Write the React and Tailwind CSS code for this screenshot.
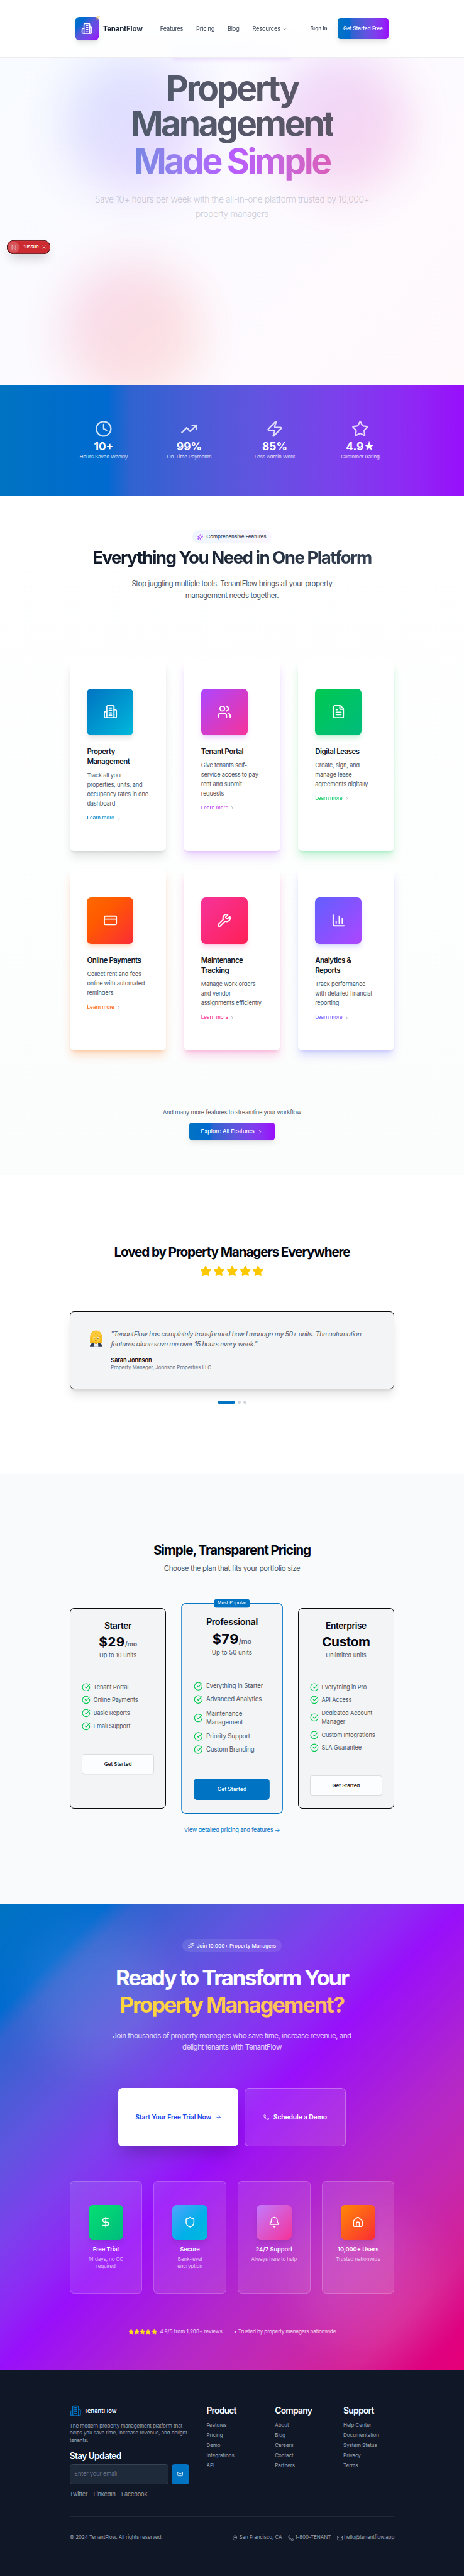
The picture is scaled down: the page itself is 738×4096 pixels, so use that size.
import React from "react";
import {
  ArrowRight, Bell, ChartColumn, ChevronDown, ChevronRight, CircleCheckBig, Clock, CreditCard,
  DollarSign, FileText, House, Mail, MapPin, Phone, Shield, Sparkles, Star, TrendingUp, Users,
  Wrench, X, Zap,
} from "lucide-react";

const BRAND =
  "bg-[linear-gradient(90deg,#0073c2_0%,#006ad0_23%,#2f63d0_28%,#4f5ad8_45%,#5f55df_54%,#7c40ec_73%,#8f27f5_89%,#980ffa_100%)]";

function Building({ className }) {
  return (
    <svg viewBox="0 0 24 24" fill="none" stroke="currentColor" strokeWidth="2" strokeLinecap="round" strokeLinejoin="round" className={className}>
      <path d="M6 22V4a2 2 0 0 1 2-2h8a2 2 0 0 1 2 2v18Z" />
      <path d="M6 12H4a2 2 0 0 0-2 2v6a2 2 0 0 0 2 2h2" />
      <path d="M18 9h2a2 2 0 0 1 2 2v9a2 2 0 0 1-2 2h-2" />
      <path d="M10 6h4M10 10h4M10 14h4M10 18h4" />
    </svg>
  );
}

function Header() {
  return (
    <header className="absolute inset-x-0 top-0 z-10 h-[160px] border-b border-[#ececef] bg-white/90 backdrop-blur-xl">
      <div className="mx-auto flex h-full w-[896px] items-center px-4">
        <div className="flex w-[234px] items-center gap-3">
          <div className="relative flex size-16 items-center justify-center rounded-[10px] bg-[linear-gradient(135deg,#0073c2_0%,#006ad0_23%,#5459da_45%,#7c40ec_73%,#980ffa_100%)] text-white shadow-lg">
            <Building className="size-8" />
            <Sparkles className="absolute -right-1 -top-1 size-3 text-[#f5b82e]" />
          </div>
          <span className="bg-[linear-gradient(90deg,#101828,#364153)] bg-clip-text text-[20px] font-bold leading-7 tracking-[-0.022em] text-transparent">TenantFlow</span>
        </div>
        <nav className="flex items-center gap-[36px] text-[16px] leading-6 tracking-[-0.018em] text-[#364153]">
          <span>Features</span>
          <span>Pricing</span>
          <span>Blog</span>
          <span className="flex items-center gap-1">Resources <ChevronDown className="size-4" /></span>
        </nav>
        <div className="ml-auto flex items-center gap-7 text-[14px] font-medium leading-5">
          <span className="tracking-[0.01em] text-[#364153]">Sign In</span>
          <span className={`flex h-14 w-[141px] items-center justify-center rounded-lg text-white shadow-lg ${BRAND}`}>Get Started Free</span>
        </div>
      </div>
    </header>
  );
}

function Hero() {
  return (
    <section className="relative flex h-[1062px] flex-col items-center overflow-hidden bg-[linear-gradient(135deg,#f7fbff_0%,#fbfaff_45%,#fdfaff_60%,#fff9fc_100%)] pt-[107px]">
      <div className="absolute left-[175px] top-[150px] size-96 rounded-full bg-[linear-gradient(135deg,#155dfc,#9810fa)] opacity-[0.14] blur-3xl" />
      <div className="absolute left-[747px] top-[150px] size-96 rounded-full bg-[linear-gradient(135deg,#9810fa,#e60076)] opacity-[0.14] blur-3xl" />
      <div className="absolute left-[173px] top-[719px] size-96 rounded-full bg-[linear-gradient(135deg,#e60076,#f54900)] opacity-[0.13] blur-3xl" />
      <div className="mb-[40px] h-12 w-[337px] rounded-xl bg-[linear-gradient(90deg,#b5e0f5,#e3ccf7)] opacity-60 shadow-[0_10px_15px_-3px_rgba(173,70,255,0.4)]" />
      <h1 className="relative text-center text-[96px] font-bold leading-[96px] tracking-[-0.062em]">
        <span className="block bg-[linear-gradient(90deg,#505a6b,#5b5566)] bg-clip-text pb-2 text-transparent">Property<br />Management</span>
        <span className="block bg-[linear-gradient(90deg,#7488e2_0%,#9b7df0_25%,#b75cff_50%,#c866da_75%,#da5fb8_100%)] bg-clip-text pb-4 text-transparent">Made Simple</span>
      </h1>
      <p className="relative mt-6 w-[780px] text-center text-[24px] font-light leading-[39px] tracking-[-0.028em] text-[#4a5565]/30">
        Save 10+ hours per week with the all-in-one platform trusted by 10,000+ property managers
      </p>
      <div className="absolute left-[19px] top-[663px] flex h-[38px] w-[120px] items-center rounded-full bg-[#ca2a30] text-white shadow-[inset_0_0_0_1px_#0a0a0a,inset_0_0_0_2px_#e5484d,0_16px_32px_-8px_rgba(0,0,0,0.24)]">
        <span className="ml-[3px] flex size-8 items-center justify-center rounded-full bg-white/20">
          <svg viewBox="0 0 14 14" className="size-3.5" fill="none" stroke="#fff" strokeWidth="1.3">
            <path d="M2 13.5V1L12.5 14" strokeOpacity="0.75" />
            <path d="M11 1v8" strokeOpacity="0.55" />
          </svg>
        </span>
        <span className="ml-[11px] whitespace-nowrap text-[13px] font-semibold leading-5">1 Issue</span>
        <X className="ml-[7px] size-[14px] shrink-0" />
      </div>
    </section>
  );
}

const STATS = [
  [Clock, "10+", "Hours Saved Weekly"],
  [TrendingUp, "99%", "On-Time Payments"],
  [Zap, "85%", "Less Admin Work"],
  [Star, "4.9", "Customer Rating"],
];

function Stats() {
  return (
    <section className={`h-[304px] pt-24 text-white ${BRAND}`}>
      <div className="mx-auto grid w-[896px] grid-cols-4 gap-12">
        {STATS.map(([Icon, n, label]) => (
          <div key={label} className="flex flex-col items-center whitespace-nowrap">
            <Icon className="size-12 opacity-80" />
            <div className="mt-2 flex h-9 items-center text-[30px] font-bold leading-9">
              {n}
              {n === "4.9" && <span className="text-[34px] leading-9 [font-family:'DejaVu_Sans',sans-serif]">★</span>}
            </div>
            <div className="text-[14px] leading-5 tracking-[-0.015em] text-white/80">{label}</div>
          </div>
        ))}
      </div>
    </section>
  );
}

const FEATURES = [
  [Building, "Property Management", "Track all your properties, units, and occupancy rates in one dashboard", "bg-[linear-gradient(135deg,#0073c2,#00b8db)]", "shadow-[0_20px_25px_-5px_rgba(0,0,0,0.1),0_8px_10px_-6px_rgba(0,0,0,0.1)]", "shadow-[0_10px_15px_-3px_rgba(0,0,0,0.1),0_4px_6px_-4px_rgba(0,0,0,0.1)]", "bg-[linear-gradient(90deg,#0073c2,#0092d0)]"],
  [Users, "Tenant Portal", "Give tenants self-service access to pay rent and submit requests", "bg-[linear-gradient(135deg,#ad46ff,#f6339a)]", "shadow-[0_20px_25px_-5px_rgba(173,70,255,0.2),0_8px_10px_-6px_rgba(173,70,255,0.2)]", "shadow-[0_10px_15px_-3px_rgba(173,70,255,0.2),0_4px_6px_-4px_rgba(173,70,255,0.2)]", "bg-[linear-gradient(90deg,#ad46ff,#cf44dd)]"],
  [FileText, "Digital Leases", "Create, sign, and manage lease agreements digitally", "bg-[linear-gradient(135deg,#00c950,#00bc7d)]", "shadow-[0_20px_25px_-5px_rgba(0,201,80,0.2),0_8px_10px_-6px_rgba(0,201,80,0.2)]", "shadow-[0_10px_15px_-3px_rgba(0,201,80,0.2),0_4px_6px_-4px_rgba(0,201,80,0.2)]", "bg-[linear-gradient(90deg,#00c950,#00c366)]"],
  [CreditCard, "Online Payments", "Collect rent and fees online with automated reminders", "bg-[linear-gradient(135deg,#ff6900_0%,#ff5a00_35%,#fb2c36_100%)]", "shadow-[0_20px_25px_-5px_rgba(255,105,0,0.2),0_8px_10px_-6px_rgba(255,105,0,0.2)]", "shadow-[0_10px_15px_-3px_rgba(255,105,0,0.2),0_4px_6px_-4px_rgba(255,105,0,0.2)]", "bg-[linear-gradient(90deg,#ff6900,#ff5510)]"],
  [Wrench, "Maintenance Tracking", "Manage work orders and vendor assignments efficiently", "bg-[linear-gradient(135deg,#f6339a,#ff2056)]", "shadow-[0_20px_25px_-5px_rgba(246,51,154,0.2),0_8px_10px_-6px_rgba(246,51,154,0.2)]", "shadow-[0_10px_15px_-3px_rgba(246,51,154,0.2),0_4px_6px_-4px_rgba(246,51,154,0.2)]", "bg-[linear-gradient(90deg,#f6339a,#fa2c80)]"],
  [ChartColumn, "Analytics & Reports", "Track performance with detailed financial reporting", "bg-[linear-gradient(135deg,#615fff,#ad46ff)]", "shadow-[0_20px_25px_-5px_rgba(97,95,255,0.2),0_8px_10px_-6px_rgba(97,95,255,0.2)]", "shadow-[0_10px_15px_-3px_rgba(97,95,255,0.2),0_4px_6px_-4px_rgba(97,95,255,0.2)]", "bg-[linear-gradient(90deg,#615fff,#8655ff)]"],
];

function Features() {
  return (
    <section className="flex h-[1875px] flex-col items-center bg-[linear-gradient(180deg,#ffffff,#fbfdfc)] pt-24">
      <div className="flex h-9 w-[220px] items-center justify-center gap-2 rounded-full bg-[linear-gradient(90deg,#eff6ff,#faf5ff)] text-[14px] font-medium tracking-[-0.006em] text-[#364153]">
        <Sparkles className="size-4 text-[#9810fa]" />
        Comprehensive Features
      </div>
      <h2 className="mt-4 bg-[linear-gradient(90deg,#101828,#1e2939_50%,#364153)] bg-clip-text text-[48px] font-bold leading-[48px] tracking-[-0.056em] text-transparent">
        Everything You Need in One Platform
      </h2>
      <p className="mt-8 w-[600px] text-center text-[20px] leading-[32.5px] tracking-[-0.037em] text-[#4a5565]">
        Stop juggling multiple tools. TenantFlow brings all your property management needs together.
      </p>
      <div className="mt-[160px] grid w-[896px] grid-cols-3 gap-12">
        {FEATURES.map(([Icon, title, text, grad, shadow, iconShadow, link]) => (
          <div key={title} className={`rounded-xl bg-white px-12 py-20 ${shadow}`}>
            <div className={`flex size-32 items-center justify-center rounded-xl text-white ${grad} ${iconShadow}`}>
              <Icon className="size-10" />
            </div>
            <h3 className="mt-8 text-[20px] font-semibold leading-7 tracking-[-0.045em] text-[#101828]">{title}</h3>
            <p className="mt-3 text-[16px] leading-[26px] tracking-[-0.021em] text-[#4a5565]">{text}</p>
            <div className="mt-4 flex items-center gap-1 text-[14px] font-medium leading-5 tracking-[-0.007em]">
              <span className={`bg-clip-text text-transparent ${link}`}>Learn more</span>
              <ChevronRight className="size-4 text-[#99a1af]" />
            </div>
          </div>
        ))}
      </div>
      <p className="mt-[160px] text-[16px] leading-6 tracking-[-0.023em] text-[#4a5565]">And many more features to streamline your workflow</p>
      <div className={`mt-4 flex h-12 w-[236px] items-center justify-center gap-2 rounded-lg text-[16px] font-medium tracking-[-0.012em] text-white shadow-lg ${BRAND}`}>
        Explore All Features <ChevronRight className="size-4" />
      </div>
    </section>
  );
}

function WomanOffice() {
  return (
    <svg viewBox="0 0 48 48" className="size-12">
      <path d="M24 2.5C14 2.5 8 10 7.500 20c-.3 6-.4 11-.5 17 3 1.500 8 2 11 2h12c3 0 8-.5 11-2-.1-6-.2-11-.5-17C40 10 34 2.500 24 2.500Z" fill="#f4b81c" />
      <path d="M7 48c0-6 2.500-9.500 9-10.500l8 2 8-2c6.500 1 9 4.500 9 10.500Z" fill="#2f3b57" />
      <path d="M18.500 37h11l.8 11H17.700Z" fill="#e6eef7" />
      <path d="M20 32h8v6c-1.500 2.500-6.500 2.500-8 0Z" fill="#e59a0a" />
      <ellipse cx="24" cy="23.500" rx="12.300" ry="12.500" fill="#fecb35" />
      <path d="M24 4C15 4 9.500 10 9 21c6-1 11-5 13-11 4 7 9 10 17 11C38.500 9 32 4 24 4Z" fill="#fbc93a" />
      <path d="M22 10c4 7 9 10 15.500 11" fill="none" stroke="#d98f0c" strokeWidth="1" />
      <ellipse cx="18.500" cy="23.500" rx="2.200" ry="2.500" fill="#fff" />
      <ellipse cx="29.500" cy="23.500" rx="2.200" ry="2.500" fill="#fff" />
      <circle cx="18.700" cy="23.700" r="1.700" fill="#3a2208" />
      <circle cx="29.300" cy="23.700" r="1.700" fill="#3a2208" />
      <path d="M20.500 30.500c2 1 5 1 7 0-.8 2.300-6.200 2.300-7 0Z" fill="#6b1f10" />
    </svg>
  );
}

function Testimonials() {
  return (
    <section className="flex h-[822px] flex-col items-center bg-white pt-48">
      <h2 className="text-[36px] font-bold leading-10 tracking-[-0.057em] text-[#030712]">Loved by Property Managers Everywhere</h2>
      <div className="mt-4 flex gap-1">
        {[0, 1, 2, 3, 4].map((i) => <Star key={i} className="size-8 fill-[#fcc800] text-[#fcc800]" />)}
      </div>
      <div className="mt-24 flex h-[214px] w-[896px] gap-4 rounded-xl border border-[#0a0a0a] bg-[#f3f4f6] p-12 shadow-xl">
        <WomanOffice />
        <div className="w-[700px]">
          <p className="text-[18px] italic leading-7 tracking-[-0.032em] text-[#4a5565]">
            "TenantFlow has completely transformed how I manage my 50+ units. The automation features alone save me over 15 hours every week."
          </p>
          <p className="mt-4 text-[16px] font-semibold leading-6 tracking-[-0.012em] text-[#030712]">Sarah Johnson</p>
          <p className="text-[14px] leading-5 tracking-[-0.015em] text-[#6a7282]">Property Manager, Johnson Properties LLC</p>
        </div>
      </div>
      <div className="mt-8 flex gap-2">
        <span className="h-2 w-12 rounded-full bg-[#0073c2]" />
        <span className="size-2 rounded-full bg-[#d1d5dc]" />
        <span className="size-2 rounded-full bg-[#d1d5dc]" />
      </div>
    </section>
  );
}

function Plan({ name, price, per, units, items, featured }) {
  return (
    <div className={featured
      ? "relative h-[553px] scale-105 rounded-xl border-2 border-[#0073c2] bg-[#f3f4f6] px-8 pt-8"
      : "relative h-[553px] rounded-xl border border-[#0a0a0a] bg-[#f3f4f6] px-8 pt-8"}>
      {featured && (
        <span className="absolute -top-[12px] left-1/2 flex h-[22px] w-[94px] -translate-x-1/2 items-center justify-center whitespace-nowrap rounded-md bg-[#0073c2] text-[12px] font-medium text-white">Most Popular</span>
      )}
      <div className="flex flex-col items-center">
        <h3 className="text-[24px] font-semibold leading-8 tracking-[-0.03em] text-[#030712]">{name}</h3>
        <div className="mt-2 flex h-10 items-baseline text-[36px] font-bold leading-10 text-[#030712]">
          <span className={per ? "tracking-[0.02em]" : "tracking-[-0.02em]"}>{price}</span>
          {per && <span className="text-[18px] leading-7 tracking-[-0.018em] text-[#6a7282]">/mo</span>}
        </div>
        <p className="mt-1 text-[16px] leading-6 text-[#4a5565]">{units}</p>
      </div>
      <ul className="mt-16 flex flex-col gap-3 text-[16px] leading-6 tracking-[-0.016em] text-[#4a5565]">
        {items.map((t) => (
          <li key={t} className="flex items-center gap-2"><CircleCheckBig className="size-6 shrink-0 text-[#00c950]" />{t}</li>
        ))}
      </ul>
      <div className={featured
        ? "mt-16 flex h-14 items-center justify-center rounded-lg bg-[#0073c2] text-[14px] font-medium text-white"
        : "mt-16 flex h-14 items-center justify-center rounded-lg border border-[#d9dce1] bg-[#fcfdfe] text-[14px] font-medium text-[#030712] shadow-xs"}>
        Get Started
      </div>
    </div>
  );
}

function Pricing() {
  return (
    <section className="flex h-[1189px] flex-col items-center bg-[#f9fafc] pt-48">
      <h2 className="text-[36px] font-bold leading-10 tracking-[-0.054em] text-[#030712]">Simple, Transparent Pricing</h2>
      <p className="mt-4 text-[20px] leading-7 tracking-[-0.033em] text-[#4a5565]">Choose the plan that fits your portfolio size</p>
      <div className="mt-24 grid w-[896px] grid-cols-3 gap-12">
        <Plan name="Starter" price="$29" per units="Up to 10 units" items={["Tenant Portal", "Online Payments", "Basic Reports", "Email Support"]} />
        <Plan featured name="Professional" price="$79" per units="Up to 50 units" items={["Everything in Starter", "Advanced Analytics", "Maintenance Management", "Priority Support", "Custom Branding"]} />
        <Plan name="Enterprise" price="Custom" units="Unlimited units" items={["Everything in Pro", "API Access", "Dedicated Account Manager", "Custom Integrations", "SLA Guarantee"]} />
      </div>
      <p className="mt-12 text-[16px] leading-6 tracking-[-0.022em] text-[#0073c2]">View detailed pricing and features →</p>
    </section>
  );
}

const PERKS = [
  [DollarSign, "Free Trial", "14 days, no CC required", "bg-[linear-gradient(135deg,#05df72,#00bc7d)]"],
  [Shield, "Secure", "Bank-level encryption", "bg-[linear-gradient(135deg,#51a2ff_0%,#00b0e8_60%,#00b8db_100%)]"],
  [Bell, "24/7 Support", "Always here to help", "bg-[linear-gradient(135deg,#c27aff,#f6339a)]"],
  [House, "10,000+ Users", "Trusted nationwide", "bg-[linear-gradient(135deg,#ff8904,#fb2c36)]"],
];

function CallToAction() {
  return (
    <section className="relative flex h-[1285px] flex-col items-center overflow-hidden bg-[linear-gradient(135deg,#0073c2_0%,#006ad0_11.5%,#2f63d0_14.5%,#4f5ad8_22.5%,#5f55df_27%,#7c40ec_36.500%,#8f27f5_44.500%,#980ffa_50%,#b428c8_68%,#c428b0_78%,#d61f94_88%,#df0080_95.500%,#e60076_100%)] pt-24 text-white">
      <div className="absolute left-[74px] top-[56px] size-96 rounded-full bg-white/10 blur-3xl" />
      <div className="absolute left-[820px] top-[850px] size-96 rounded-full bg-white/10 blur-3xl" />
      <div className="relative flex h-9 w-[274px] items-center justify-center gap-2 rounded-full bg-white/10 text-[14px] font-medium">
        <Sparkles className="size-4" /> Join 10,000+ Property Managers
      </div>
      <h2 className="relative mt-8 text-center text-[60px] font-bold leading-[75px] tracking-[-0.061em]">
        Ready to Transform Your
        <span className="block bg-[linear-gradient(90deg,#ffd83a,#ffb86a)] bg-clip-text text-transparent">Property Management?</span>
      </h2>
      <p className="relative mt-8 w-[700px] text-center text-[20px] leading-[32.5px] tracking-[-0.041em] text-white/80">
        Join thousands of property managers who save time, increase revenue, and delight tenants with TenantFlow
      </p>
      <div className="relative mt-24 flex gap-4 text-[18px] font-semibold tracking-[-0.014em]">
        <div className="flex h-[160px] w-[332px] items-center justify-center gap-3 rounded-xl bg-white text-[#1a4be8] shadow-2xl">
          Start Your Free Trial Now <ArrowRight className="size-4" />
        </div>
        <div className="flex h-[160px] w-[280px] items-center justify-center gap-3 rounded-xl border-2 border-white/30 bg-white/10">
          <Phone className="size-4" /> Schedule a Demo
        </div>
      </div>
      <div className="relative mt-24 grid w-[896px] grid-cols-4 gap-8">
        {PERKS.map(([Icon, title, text, grad]) => (
          <div key={title} className="flex h-[310px] flex-col items-center rounded-xl border border-white/20 bg-white/10 px-8 pt-16 text-center">
            <div className={`flex size-24 shrink-0 items-center justify-center rounded-xl shadow-lg ${grad}`}><Icon className="size-8" /></div>
            <h3 className="mt-4 whitespace-nowrap text-[16px] font-semibold leading-6">{title}</h3>
            <p className="mt-1 text-[14px] leading-5 tracking-[-0.015em] text-white/70">{text}</p>
          </div>
        ))}
      </div>
      <div className="relative mt-24 flex items-center gap-8 text-[14px] leading-5 text-white/80">
        <span className="flex items-center gap-2 tracking-[-0.004em]">
          <span className="flex">{[0, 1, 2, 3, 4].map((i) => <Star key={i} className="size-4 fill-[#ffdf20] text-[#ffdf20]" />)}</span>
          4.9/5 from 1,200+ reviews
        </span>
        <span className="tracking-[-0.013em]">• Trusted by property managers nationwide</span>
      </div>
    </section>
  );
}

const COLUMNS = [
  ["Product", ["Features", "Pricing", "Demo", "Integrations", "API"]],
  ["Company", ["About", "Blog", "Careers", "Contact", "Partners"]],
  ["Support", ["Help Center", "Documentation", "System Status", "Privacy", "Terms"]],
];

function Footer() {
  return (
    <footer className="h-[567px] bg-[#101828] pt-24 text-[#99a1af]">
      <div className="mx-auto w-[896px]">
        <div className="grid grid-cols-5 gap-12">
          <div className="col-span-2">
            <div className="flex items-center gap-2">
              <Building className="size-8 text-[#0073c2]" />
              <span className="text-[16px] font-semibold text-white">TenantFlow</span>
            </div>
            <p className="mt-4 text-[14px] leading-5 tracking-[-0.0135em]">
              The modern property management platform that helps you save time, increase revenue, and delight tenants.
            </p>
            <h4 className="mt-4 text-[24px] font-semibold leading-8 tracking-[-0.049em] text-white">Stay Updated</h4>
            <div className="mt-1.5 flex gap-2">
              <div className="flex h-14 w-[274px] items-center rounded-lg border border-[#364153] bg-[#1e2939] px-3 text-[16px] tracking-[-0.02em] text-[#6a7282]">Enter your email</div>
              <div className="flex h-14 w-12 items-center justify-center rounded-lg bg-[#0073c2] text-white"><Mail className="size-4" /></div>
            </div>
            <div className="mt-4 flex gap-4 text-[16px] leading-6 tracking-[-0.019em]">
              <span>Twitter</span><span>LinkedIn</span><span>Facebook</span>
            </div>
          </div>
          {COLUMNS.map(([title, links]) => (
            <div key={title}>
              <h4 className="text-[24px] font-semibold leading-8 tracking-[-0.055em] text-white">{title}</h4>
              <ul className="mt-3.5 flex flex-col gap-2 text-[14px] leading-5 tracking-[-0.01em]">
                {links.map((l) => <li key={l}>{l}</li>)}
              </ul>
            </div>
          ))}
        </div>
        <div className="mt-12 flex justify-between border-t border-[#1e2939] pt-12 text-[14px] leading-5 tracking-[-0.012em]">
          <span>© 2024 TenantFlow. All rights reserved.</span>
          <div className="flex gap-4">
            <span className="flex items-center gap-1"><MapPin className="size-4" />San Francisco, CA</span>
            <span className="flex items-center gap-1"><Phone className="size-4" />1-800-TENANT</span>
            <span className="flex items-center gap-1"><Mail className="size-4" />hello@tenantflow.app</span>
          </div>
        </div>
      </div>
    </footer>
  );
}

export default function App() {
  return (
    <div className="relative w-[1280px] overflow-hidden bg-white font-['Inter',sans-serif] antialiased [zoom:0.5765625]">
      <Header />
      <Hero />
      <Stats />
      <Features />
      <Testimonials />
      <Pricing />
      <CallToAction />
      <Footer />
    </div>
  );
}
